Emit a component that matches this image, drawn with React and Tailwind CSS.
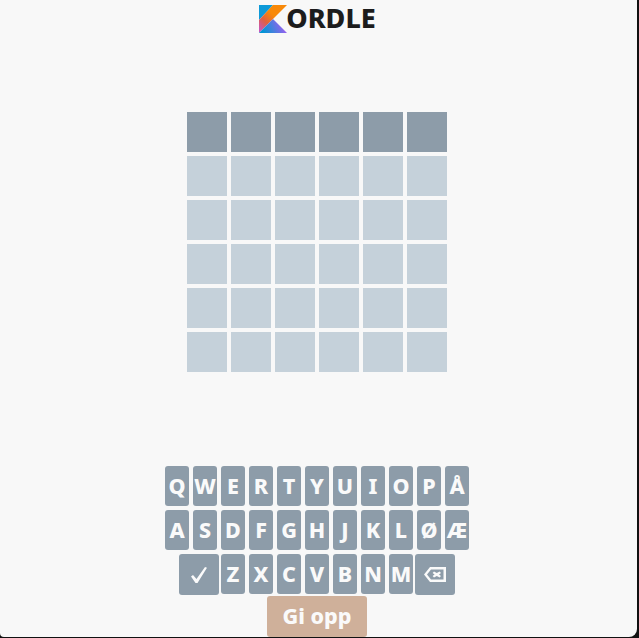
const rows = [
  ["Q","W","E","R","T","Y","U","I","O","P","Å"],
  ["A","S","D","F","G","H","J","K","L","Ø","Æ"],
];
const row3 = ["Z","X","C","V","B","N","M"];
const font = { fontFamily: '"Noto Sans", sans-serif' };

function Key({ children, wide }) {
  return (
    <div className={`flex items-center justify-center rounded-[3px] bg-[#8d9ca9] text-[21.5px] font-extrabold leading-none text-[#fafafa] ${wide ? "h-[41px] w-10" : "h-10 w-6"}`}>
      {children}
    </div>
  );
}

export default function App() {
  return (
    <div className="h-[638px] w-[639px] overflow-hidden bg-[#111111]" style={font}>
      <div className="flex h-[637px] w-[637px] flex-col items-center rounded-b-[8px] rounded-bl-[4px] bg-[#f8f8f8] pr-[3px]">
        <div className="flex h-[112px] w-full items-start justify-center pl-[1px] pt-[5px]">
          <svg width="28" height="28" viewBox="0 0 28 28" className="shrink-0">
            <defs>
              <linearGradient id="b" x1="0" y1="24" x2="20" y2="4" gradientUnits="userSpaceOnUse">
                <stop offset="0" stopColor="#c757bc" />
                <stop offset="0.35" stopColor="#e0603f" />
                <stop offset="0.7" stopColor="#f88909" />
                <stop offset="1" stopColor="#f88909" />
              </linearGradient>
              <linearGradient id="c" x1="4" y1="28" x2="24" y2="18" gradientUnits="userSpaceOnUse">
                <stop offset="0" stopColor="#0095d5" />
                <stop offset="0.4" stopColor="#3c83dc" />
                <stop offset="1" stopColor="#9d5ff0" />
              </linearGradient>
            </defs>
            <polygon points="0,0 14,0 0,15" fill="#0e9ad8" />
            <polygon points="14,0 28,0 0,28 0,15" fill="url(#b)" />
            <polygon points="14,14 28,28 0,28" fill="url(#c)" />
          </svg>
          <span className="-ml-[1px] -mt-[1px] text-[27px] font-extrabold leading-[28px] text-[#1c1c1c]">ORDLE</span>
        </div>

        <div className="grid grid-cols-6 gap-1">
          {Array.from({ length: 36 }, (_, i) => (
            <div key={i} className={`h-10 w-10 ${i < 6 ? "bg-[#8d9ca9]" : "bg-[#c5d1da]"}`} />
          ))}
        </div>

        <div className="mt-[94px] flex flex-col items-center gap-1">
          {rows.map((r, i) => (
            <div key={i} className="flex gap-1">
              {r.map((k) => <Key key={k}>{k}</Key>)}
            </div>
          ))}
          <div className="flex items-start gap-[2px]">
            <Key wide>
              <svg width="18" height="18" viewBox="0 0 18 18" fill="#fafafa">
                <path d="M1 10.5 3 9 6.5 13 15 1 17 1.8 7.5 17 5.5 17z" />
              </svg>
            </Key>
            <div className="flex gap-1">
              {row3.map((k) => <Key key={k}>{k}</Key>)}
            </div>
            <Key wide>
              <svg width="22" height="15" viewBox="0 0 22 15" fill="#fafafa" fillRule="evenodd" className="-mt-[1px]">
                <path d="M6 0H22V15H6L0 7.5zM7 2.5 3 7.5 7 12.5H19.5V2.5zM10 4.5 12.8 6 15.6 4.5 17 6 15 7.5 17 9 15.6 10.5 12.8 9 10 10.5 8.6 9 10.6 7.5 8.6 6z" />
              </svg>
            </Key>
          </div>
        </div>

        <div className="mt-[1px] flex h-[41px] w-[100px] items-center justify-center rounded-[3px] bg-[#cfb09a] pb-[1px] text-[21.5px] font-extrabold leading-none text-[#fafafa]">
          Gi opp
        </div>
      </div>
    </div>
  );
}
